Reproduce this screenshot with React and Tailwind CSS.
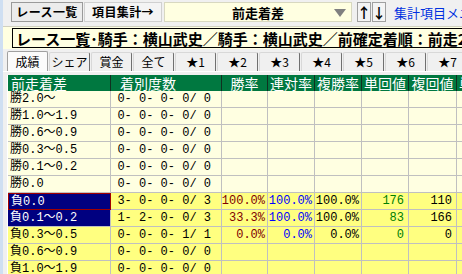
import React from "react";

const rows = [
  { label: "勝2.0～", deg: "0- 0- 0- 0/ 0" },
  { label: "勝1.0～1.9", deg: "0- 0- 0- 0/ 0" },
  { label: "勝0.6～0.9", deg: "0- 0- 0- 0/ 0" },
  { label: "勝0.3～0.5", deg: "0- 0- 0- 0/ 0" },
  { label: "勝0.1～0.2", deg: "0- 0- 0- 0/ 0" },
  { label: "勝0.0", deg: "0- 0- 0- 0/ 0" },
  { label: "負0.0", deg: "3- 0- 0- 0/ 3", hl: true, sel: "focus", v: ["100.0%", "100.0%", "100.0%", "176", "110"] },
  { label: "負0.1～0.2", deg: "1- 2- 0- 0/ 3", hl: true, sel: "sel", v: ["33.3%", "100.0%", "100.0%", "83", "166"] },
  { label: "負0.3～0.5", deg: "0- 0- 0- 1/ 1", hl: true, v: ["0.0%", "0.0%", "0.0%", "0", "0"] },
  { label: "負0.6～0.9", deg: "0- 0- 0- 0/ 0", hl: true },
  { label: "負1.0～1.9", deg: "0- 0- 0- 0/ 0", hl: true },
];

const tabs = ["成績", "シェア", "賞金", "全て", "★1", "★2", "★3", "★4", "★5", "★6", "★7"];

const heads = ["勝率", "連対率", "複勝率", "単回値", "複回値"];

const valColors = ["text-[#800000]", "text-[#0000ff]", "text-black", "text-[#008000]", "text-black"];

const grid = "grid grid-cols-[103px_111px_46px_47px_47px_47px_48px_1fr]";

export default function App() {
  return (
    <div className="flex h-[274px] w-[462px] overflow-hidden bg-[#f0f0f0] font-['Noto_Sans_CJK_JP',sans-serif] text-black">
      <div className="w-[3px] shrink-0 bg-[#cfdff2]" />
      <div className="flex min-w-0 flex-1 flex-col">
        {/* toolbar */}
        <div className="flex h-[26px] shrink-0 items-start overflow-hidden whitespace-nowrap pl-[8px] pt-[2px]">
          <div className="flex h-[20px] w-[72px] shrink-0 items-center justify-center border border-[#9a9a9a] bg-[#ececec] text-[12px] font-bold leading-none tracking-[0.4px]">
            レース一覧
          </div>
          <div className="ml-[1px] flex h-[20px] w-[78px] shrink-0 items-center justify-center border border-[#d0d0d0] bg-[#f4f4f4] text-[12px] font-bold leading-none tracking-[0.4px]">
            項目集計→
          </div>
          <div className="relative ml-[2px] flex h-[20px] w-[188px] shrink-0 items-center justify-center border border-[#d8d8c0] bg-[#ffffe1] text-[13px] font-bold leading-none">
            前走着差
            <svg className="absolute right-[5px] top-[6px]" width="12" height="8" viewBox="0 0 12 8">
              <polygon points="0,0 12,0 6,8" fill="#808080" />
            </svg>
          </div>
          <div className="ml-[5px] flex h-[20px] w-[14px] shrink-0 items-center justify-center border border-[#a0a0a0] bg-[#f4f4f4] text-[14px] font-bold leading-none">
            ↑
          </div>
          <div className="ml-[1px] flex h-[20px] w-[14px] shrink-0 items-center justify-center border border-[#a0a0a0] bg-[#f4f4f4] text-[14px] font-bold leading-none">
            ↓
          </div>
          <div className="ml-[8px] flex h-[20px] shrink-0 items-center text-[13px] leading-none text-[#0030e0]">
            集計項目メニュー
          </div>
        </div>

        {/* title bar */}
        <div className="h-[23px] shrink-0 border-t border-[#d0d0c0] bg-[#ffffe1] pl-[9px] pt-[1px]">
          <div className="flex h-[20px] items-center overflow-hidden whitespace-nowrap border-y border-l border-black pl-[3px] text-[15px] font-bold leading-none">
            レース一覧･騎手：横山武史／騎手：横山武史／前確定着順：前走2着
          </div>
        </div>

        {/* tabs */}
        <div className="mt-[2px] flex h-[20px] shrink-0 items-end gap-[1px] overflow-hidden whitespace-nowrap pl-[4px]">
          {tabs.map((t, i) => (
            <div
              key={t}
              className={
                i === 0
                  ? "flex h-[20px] w-[41px] shrink-0 items-center justify-center rounded-t-[2px] border-x border-t border-[#a0a0a0] bg-[#fbfbfb] text-[12px] leading-none"
                  : "flex h-[19px] w-[41px] shrink-0 items-center justify-center rounded-t-[2px] border-x border-t border-l-[#d8d8d8] border-r-[#707070] border-t-[#d8d8d8] bg-[#f0f0f0] text-[12px] leading-none"
              }
            >
              {t}
            </div>
          ))}
        </div>

        {/* panel */}
        <div className="flex-1 border-t border-white pl-[4px] pt-[3px]">
          <div className="border-l border-white font-['Liberation_Mono','Noto_Sans_CJK_JP',monospace] text-[12px] leading-none">
            <div className={`${grid} h-[16px] bg-[#007840] font-['Noto_Sans_CJK_JP',sans-serif] text-[14px] text-white`}>
              <div className="flex items-center border-r border-[#103020] pl-[3px]">前走着差</div>
              <div className="flex items-center border-r border-[#103020] pl-[9px]">着別度数</div>
              {heads.map((h) => (
                <div key={h} className="flex items-center justify-center whitespace-nowrap border-r border-[#103020]">
                  {h}
                </div>
              ))}
              <div className="flex items-center whitespace-nowrap pl-[2px]">単</div>
            </div>
            {rows.map((r) => {
              const bg = r.hl ? "bg-[#ffff80]" : "bg-[#ffffe1]";
              let first = `${bg} border-r border-b border-[#c0c0c0]`;
              if (r.sel === "focus") first = "bg-[#000080] text-white border border-[#a00000]";
              if (r.sel === "sel") first = "bg-[#000080] text-white border-r border-b border-[#c0c0c0]";
              const v = r.v || ["", "", "", "", ""];
              return (
                <div key={r.label} className={`${grid} h-[17px]`}>
                  <div className={`flex items-center whitespace-pre pl-[2px] ${first}`}>{r.label}</div>
                  <div className={`flex items-center justify-end whitespace-pre border-r border-b border-[#c0c0c0] pr-[10px] ${bg}`}>
                    {r.deg}
                  </div>
                  {v.map((x, i) => (
                    <div
                      key={i}
                      className={`flex items-center justify-end border-r border-b border-[#c0c0c0] ${i < 3 ? "pr-[2px]" : "pr-[4px]"} ${bg} ${valColors[i]}`}
                    >
                      {x}
                    </div>
                  ))}
                  <div className={`border-b border-[#c0c0c0] ${bg}`} />
                </div>
              );
            })}
          </div>
        </div>
      </div>
    </div>
  );
}
